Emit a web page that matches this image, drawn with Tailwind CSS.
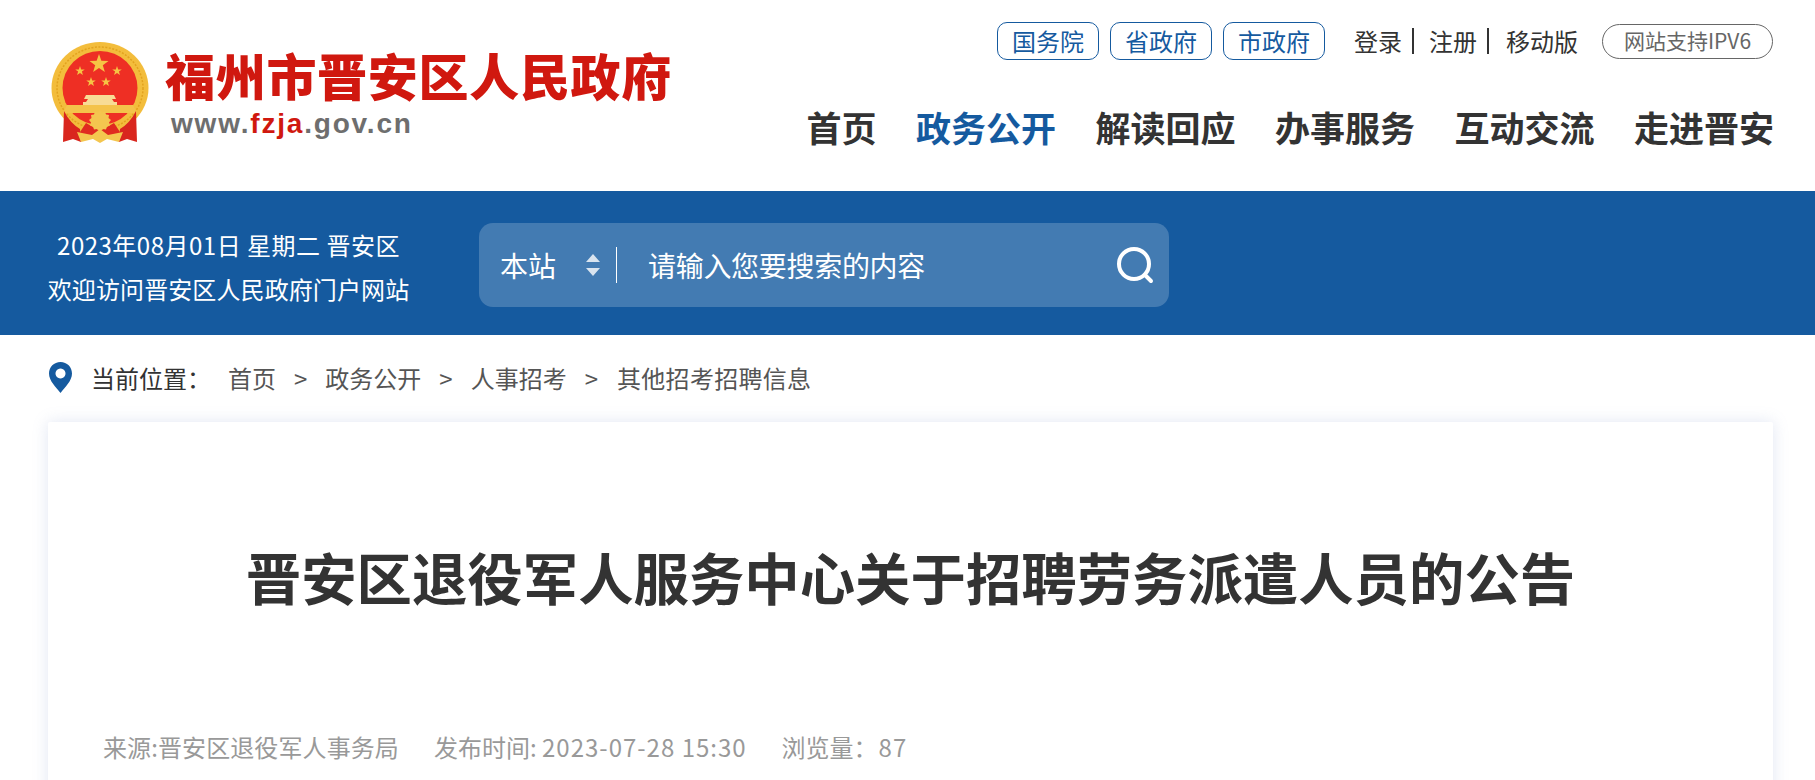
<!DOCTYPE html>
<html lang="zh-CN">
<head>
<meta charset="utf-8">
<title>晋安区退役军人服务中心关于招聘劳务派遣人员的公告</title>
<script src="https://cdn.jsdelivr.net/npm/@tailwindcss/browser@4"></script>
</head>
<body class="h-[780px] overflow-hidden bg-white font-['Noto_Sans_CJK_SC',sans-serif] text-[#333]">
<header class="h-[191px] flex justify-between pl-[50px] pr-[42px]">
  <div class="flex items-start pt-[41px]">
    <svg class="w-[100px] h-[105px] shrink-0" viewBox="0 0 100 105">
      <ellipse cx="50" cy="47" rx="48.500" ry="46" fill="#f3bd3c"/>
      <ellipse cx="50" cy="47" rx="43" ry="41" fill="none" stroke="#e2a21f" stroke-width="1.500" stroke-dasharray="2 1.500"/>
      <ellipse cx="50" cy="47" rx="37.500" ry="37" fill="#ee2f24"/>
      <g fill="#f6c444">
        <polygon transform="translate(49 23) scale(2)" points="0,-5 1.180,-1.620 4.760,-1.550 1.900,.620 2.940,4.050 0,2 -2.940,4.050 -1.900,.620 -4.760,-1.550 -1.180,-1.620"/>
        <polygon transform="translate(30 30)" points="0,-5 1.180,-1.620 4.760,-1.550 1.900,.620 2.940,4.050 0,2 -2.940,4.050 -1.900,.620 -4.760,-1.550 -1.180,-1.620"/>
        <polygon transform="translate(67 30)" points="0,-5 1.180,-1.620 4.760,-1.550 1.900,.620 2.940,4.050 0,2 -2.940,4.050 -1.900,.620 -4.760,-1.550 -1.180,-1.620"/>
        <polygon transform="translate(41 41)" points="0,-5 1.180,-1.620 4.760,-1.550 1.900,.620 2.940,4.050 0,2 -2.940,4.050 -1.900,.620 -4.760,-1.550 -1.180,-1.620"/>
        <polygon transform="translate(56 41)" points="0,-5 1.180,-1.620 4.760,-1.550 1.900,.620 2.940,4.050 0,2 -2.940,4.050 -1.900,.620 -4.760,-1.550 -1.180,-1.620"/>
      </g>
      <path d="M36 54 H64 L66 58 H62 L64 61 H67 V64 H33 V61 H36 L38 58 H34Z" fill="#f8dc95"/>
      <path d="M17 64 H83 L87 72 H13Z" fill="#f4c34a"/>
      <path d="M13 72 L24 84 L40 90 H60 L76 84 L87 72 L85 80 L70 92 H30 L15 80Z" fill="#f3bd3c"/>
      <path d="M14 70 L13 101 L23 98 L31 101 L30 88 Q20 82 14 70Z" fill="#d9261e"/>
      <path d="M86 70 L87 101 L77 98 L69 101 L70 88 Q80 82 86 70Z" fill="#d9261e"/>
      <path d="M36 82 L50 90 L64 82 L72 94 L28 94Z" fill="#e02a20"/>
      <path d="M50 69 l2 2.500 3 -1 1 3 3 .5 -.5 3 2.500 2 -2 2.500 1 3 -3 1 -1 3 -3 -.5 -3 2 -3 -2 -3 .5 -1 -3 -3 -1 1 -3 -2 -2.500 2.500 -2 -.5 -3 3 -.5 1 -3 3 1Z" fill="#f4c64f"/>
      <path d="M27 91 L42 94 L50 88 L58 94 L73 91 L69 101 L57 98 L50 102 L43 98 L31 101Z" fill="#f4c64f"/>
    </svg>
    <div class="ml-[15px] mt-[6px]">
      <div class="text-[50px] leading-[54px] font-black text-[#d0180f] whitespace-nowrap tracking-[0.7px]">福州市晋安区人民政府</div>
      <div class="mt-[7px] ml-[6px] text-[28px] leading-[32px] font-bold font-['Liberation_Sans',sans-serif] text-[#6e6e6e] tracking-[1.8px]">www.<span class="text-[#d0180f]">fzja</span>.gov.cn</div>
    </div>
  </div>
  <div class="flex flex-col items-end pt-[22px]">
    <div class="flex items-center h-[38px]">
      <a class="w-[102px] h-[38px] flex items-center justify-center rounded-[10px] border border-[#155a9f] text-[#155a9f] text-[24px]">国务院</a>
      <a class="ml-[11px] w-[102px] h-[38px] flex items-center justify-center rounded-[10px] border border-[#155a9f] text-[#155a9f] text-[24px]">省政府</a>
      <a class="ml-[11px] w-[102px] h-[38px] flex items-center justify-center rounded-[10px] border border-[#155a9f] text-[#155a9f] text-[24px]">市政府</a>
      <div class="ml-[29px] flex items-center text-[24px] whitespace-nowrap">
        <span>登录</span><span class="ml-[10px] w-[2px] h-[26px] bg-[#333]"></span>
        <span class="ml-[15px]">注册</span><span class="ml-[10px] w-[2px] h-[26px] bg-[#333]"></span>
        <span class="ml-[17px]">移动版</span>
      </div>
      <div class="ml-[24px] w-[171px] h-[35px] flex items-center justify-center rounded-full border border-[#666] text-[#666] text-[21px] whitespace-nowrap">网站支持IPV6</div>
    </div>
    <nav class="mt-[43px] -mr-px flex gap-[39.5px] text-[35px] leading-[48px] font-bold whitespace-nowrap">
      <a>首页</a><a class="text-[#155a9f]">政务公开</a><a>解读回应</a><a>办事服务</a><a>互动交流</a><a>走进晋安</a>
    </nav>
  </div>
</header>

<section class="h-[144px] bg-[#155a9f] flex items-center pl-[47px] text-white">
  <div class="mt-[8px] w-[363px] text-center text-[24px] leading-[44px] whitespace-nowrap">
    <div class="tracking-[0.5px]">2023年08月01日 星期二 晋安区</div>
    <div class="tracking-[0.1px]">欢迎访问晋安区人民政府门户网站</div>
  </div>
  <div class="mt-[4px] ml-[69px] w-[690px] h-[84px] rounded-[14px] bg-white/20 flex items-center pl-[21px] pr-[15px]">
    <span class="text-[28px] w-[56px]">本站</span>
    <svg class="ml-[29px] w-[16px] h-[24px] opacity-80" viewBox="0 0 16 24"><path d="M8 1 L15 9 H1Z M8 23 L15 15 H1Z" fill="#fff"/></svg>
    <span class="ml-[15px] w-[1px] h-[36px] bg-white"></span>
    <span class="ml-[31px] text-[28px] tracking-[-0.3px] flex-1">请输入您要搜索的内容</span>
    <svg class="w-[38px] h-[38px]" viewBox="0 0 38 38" fill="none" stroke="#fff" stroke-width="4" stroke-linecap="round"><circle cx="18" cy="18" r="15"/><path d="M29 29 L35 35"/></svg>
  </div>
</section>

<div class="h-[87px] pl-[49px] flex items-center pb-[2px] text-[24px] text-[#555] whitespace-nowrap">
  <svg class="w-[23px] h-[31px]" viewBox="0 0 23 31"><path fill-rule="evenodd" d="M11.500 0 C18 0 23 5 23 11.500 C23 19 16 25 11.500 31 C7 25 0 19 0 11.500 C0 5 5 0 11.500 0Z M11.500 6.500 a5 5 0 1 0 .01 0Z" fill="#155a9f"/></svg>
  <span class="ml-[19px] text-[#333]">当前位置：</span>
  <span class="ml-[17px]">首页</span>
  <span class="ml-[18px]">&gt;</span>
  <span class="ml-[18px]">政务公开</span>
  <span class="ml-[18px]">&gt;</span>
  <span class="ml-[18px]">人事招考</span>
  <span class="ml-[18px]">&gt;</span>
  <span class="ml-[19px] tracking-[0.3px]">其他招考招聘信息</span>
</div>

<main class="ml-[48px] mr-[42px] h-[600px] bg-white shadow-[0_0_16px_rgba(120,140,200,0.22)] rounded-[2px]">
  <h1 class="pt-[118px] text-center text-[55.4px] leading-[72px] font-bold whitespace-nowrap">晋安区退役军人服务中心关于招聘劳务派遣人员的公告</h1>
  <div class="mt-[117px] ml-[55px] flex text-[24px] leading-[36px] text-[#999] whitespace-nowrap">
    <span class="tracking-[0.1px]">来源:晋安区退役军人事务局</span>
    <span class="ml-[35px]">发布时间: <span class="tracking-[1px]">2023-07-28 15:30</span></span>
    <span class="ml-[35px]">浏览量：<span class="ml-[1px] tracking-[1px]">87</span></span>
  </div>
</main>
</body>
</html>
